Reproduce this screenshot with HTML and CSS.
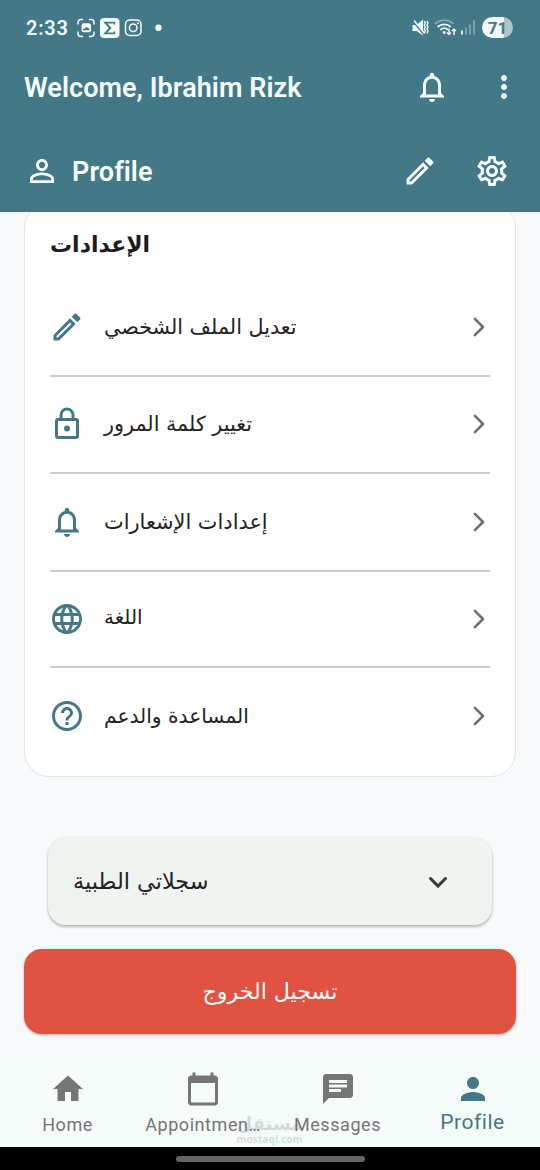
FILE: index.html
```html
<!DOCTYPE html>
<html lang="en">
<head>
<meta charset="utf-8">
<title>Profile</title>
<link rel="stylesheet" href="styles.css">
</head>
<body>
<svg class="defs" width="0" height="0" aria-hidden="true">
  <symbol id="pencil" viewBox="0 0 24 24"><path d="M3 17.25V21h3.75L17.81 9.94l-3.75-3.75L3 17.25zM5.92 19H5v-.92l9.06-9.06.92.92L5.92 19zM20.71 5.63l-2.34-2.34c-.2-.2-.45-.29-.71-.29s-.51.1-.7.29l-1.83 1.83 3.75 3.75 1.83-1.83c.39-.39.39-1.02 0-1.41z"/></symbol>
  <symbol id="bell" viewBox="0 0 24 24"><path d="M12 22c1.1 0 2-.9 2-2h-4c0 1.1.9 2 2 2zm6-6v-5c0-3.07-1.63-5.64-4.5-6.32V4c0-.83-.67-1.5-1.5-1.5s-1.5.67-1.5 1.5v.68C7.64 5.36 6 7.92 6 11v5l-2 2v1h16v-1l-2-2zm-2 1H8v-6c0-2.48 1.51-4.5 4-4.5s4 2.02 4 4.5v6z"/></symbol>
  <symbol id="chevron" viewBox="0 0 24 24"><path d="M8.6 6.600 14 12l-5.400 5.400" fill="none" stroke="currentColor" stroke-width="1.7" stroke-linecap="round" stroke-linejoin="round"/></symbol>
</svg>
<header class="header">
  <div class="status">
    <span class="clock">2:33</span>
    <svg class="status-left" width="86" height="20" viewBox="0 0 86 20">
      <g fill="none" stroke="#f4fcfc" stroke-width="1.5" stroke-linecap="round">
        <path d="M1 6V4.500A3 3 0 0 1 4 1.500h1.500M12.500 1.500H14a3 3 0 0 1 3 3V6M17 14v1.500a3 3 0 0 1-3 3h-1.500M5.500 18.500H4a3 3 0 0 1-3-3V14"/>
        <rect x="48.500" y="2" width="15.500" height="15.500" rx="4.200"/>
        <circle cx="56.200" cy="9.800" r="3.800"/>
      </g>
      <rect x="4.600" y="5.300" width="9.400" height="9" rx="2" fill="#f4fcfc"/>
      <path d="M6 12.200V11l2-.8 1.500-1.500 3 2.300v1.200z" fill="#437886"/>
      <rect x="23" y="0" width="19.500" height="20" rx="4" fill="#f4fcfc"/>
      <path d="M37.300 6.500V4.600h-9l5 5.400-5 5.400h9v-1.900" fill="none" stroke="#437886" stroke-width="1.900"/>
      <circle cx="61" cy="5.200" r="1" fill="#f4fcfc"/>
      <circle cx="81.500" cy="9.800" r="3.200" fill="#f4fcfc"/>
    </svg>
    <svg class="status-right" width="64" height="20" viewBox="0 0 64 20">
      <path d="M.5 7h4L11 1.500v16L4.500 13H.5z" fill="#f4fcfc"/>
      <path d="M1.300 3 12 16" stroke="#437886" stroke-width="2.600"/>
      <path d="M2 2.500 12.300 15" stroke="#f4fcfc" stroke-width="1.500"/>
      <path d="m12.300 3 1 2-1 2 1 2-1 2 1 2-1 2.500M15 3l1 2-1 2 1 2-1 2 1 2-1 2.500" fill="none" stroke="#f4fcfc" stroke-width="1.400"/>
      <g fill="none" stroke="#f4fcfc" stroke-width="1.700">
        <path d="M23 6c5-5 13.500-5 18.500 0" opacity=".42"/>
        <path d="M25.600 9c3.900-3.500 9.500-3.500 13.200 0M28.500 11.800c2.300-2 5.200-2 7.500 0"/>
        <path d="M37 10.500v6M35 14.500l2 2 2-2M42 17v-6M40 13l2-2 2 2" stroke-width="1.400"/>
      </g>
      <circle cx="32.200" cy="14.400" r="1.500" fill="#f4fcfc"/>
      <path d="M49.900 12.500v4" stroke="#f4fcfc" stroke-width="1.800"/>
      <path d="M54 9.500v7M58 6.500v10M62 2v14.500" stroke="#f4fcfc" stroke-width="1.500" opacity=".42"/>
    </svg>
    <span class="battery">71</span>
  </div>
  <div class="welcome">
    <h1 class="title">Welcome, Ibrahim Rizk</h1>
    <svg class="icon bell-top"><use href="#bell"/></svg>
    <svg class="icon" viewBox="0 0 24 24"><path d="M12 8c1.1 0 2-.9 2-2s-.9-2-2-2-2 .9-2 2 .9 2 2 2zm0 2c-1.100 0-2 .9-2 2s.9 2 2 2 2-.9 2-2-.9-2-2-2zm0 6c-1.100 0-2 .9-2 2s.9 2 2 2 2-.9 2-2-.9-2-2-2z"/></svg>
  </div>
  <div class="section">
    <svg class="icon" viewBox="0 0 24 24"><path d="M12 5.900c1.160 0 2.100.94 2.100 2.100s-.94 2.100-2.100 2.100S9.900 9.160 9.900 8s.94-2.100 2.100-2.100m0 9c2.970 0 6.100 1.460 6.100 2.100v1.100H5.900V17c0-.64 3.130-2.100 6.100-2.100M12 4C9.790 4 8 5.790 8 8s1.790 4 4 4 4-1.790 4-4-1.790-4-4-4zm0 9c-2.670 0-8 1.340-8 4v3h16v-3c0-2.660-5.330-4-8-4z"/></svg>
    <h2 class="title">Profile</h2>
    <svg class="icon edit-top"><use href="#pencil"/></svg>
    <svg class="icon" viewBox="0 0 24 24"><path d="M19.430 12.980c.04-.32.07-.64.07-.98 0-.34-.03-.66-.07-.98l2.110-1.650c.19-.15.24-.42.12-.64l-2-3.460c-.09-.16-.26-.25-.44-.25-.06 0-.12.01-.17.03l-2.490 1c-.52-.4-1.080-.73-1.690-.98l-.38-2.650C14.460 2.180 14.250 2 14 2h-4c-.25 0-.46.18-.49.42l-.38 2.650c-.61.25-1.170.59-1.690.98l-2.490-1c-.06-.02-.12-.03-.18-.03-.17 0-.34.09-.43.25l-2 3.460c-.13.22-.07.49.12.64l2.110 1.650c-.04.32-.07.65-.07.98 0 .33.03.66.07.98l-2.110 1.650c-.19.15-.24.42-.12.64l2 3.460c.09.16.26.25.44.25.06 0 .12-.01.17-.03l2.490-1c.52.4 1.080.73 1.690.98l.38 2.650c.03.24.24.42.49.42h4c.25 0 .46-.18.49-.42l.38-2.650c.61-.25 1.170-.59 1.690-.98l2.490 1c.06.02.12.03.18.03.17 0 .34-.09.43-.25l2-3.460c.12-.22.07-.49-.12-.64l-2.110-1.650zm-1.980-1.710c.04.31.05.52.05.73 0 .21-.02.43-.05.73l-.14 1.130.89.7 1.080.84-.7 1.210-1.270-.51-1.040-.42-.9.680c-.43.32-.84.56-1.250.73l-1.060.43-.16 1.130-.2 1.350h-1.400l-.19-1.350-.16-1.130-1.060-.43c-.43-.18-.83-.41-1.230-.71l-.91-.7-1.060.43-1.270.51-.7-1.210 1.080-.84.89-.7-.14-1.130c-.03-.31-.05-.54-.05-.74s.02-.43.05-.73l.14-1.130-.89-.7-1.080-.84.7-1.210 1.270.51 1.040.42.9-.68c.43-.32.84-.56 1.250-.73l1.060-.43.16-1.130.2-1.350h1.390l.19 1.350.16 1.130 1.060.43c.43.18.83.41 1.230.71l.91.7 1.060-.43 1.270-.51.7 1.210-1.070.85-.89.7.14 1.130zM12 8c-2.210 0-4 1.790-4 4s1.790 4 4 4 4-1.790 4-4-1.790-4-4-4zm0 6c-1.100 0-2-.9-2-2s.9-2 2-2 2 .9 2 2-.9 2-2 2z"/></svg>
  </div>
</header>
<main class="content">
  <section class="card">
    <h3 class="card-title" lang="ar">الإعدادات</h3>
    <div class="row">
      <svg class="icon"><use href="#pencil"/></svg>
      <span class="label t-edit" lang="ar">تعديل الملف الشخصي</span>
      <svg class="icon chev"><use href="#chevron"/></svg>
    </div>
    <div class="row">
      <svg class="icon" viewBox="0 0 24 24"><path d="M12 17a2 2 0 1 1 0-4 2 2 0 0 1 0 4m6 3V10H6v10h12m0-12a2 2 0 0 1 2 2v10a2 2 0 0 1-2 2H6a2 2 0 0 1-2-2V10c0-1.110.89-2 2-2h1V6a5 5 0 0 1 10 0v2h1m-6-5a3 3 0 0 0-3 3v2h6V6a3 3 0 0 0-3-3z"/></svg>
      <span class="label t-password" lang="ar">تغيير كلمة المرور</span>
      <svg class="icon chev"><use href="#chevron"/></svg>
    </div>
    <div class="row">
      <svg class="icon"><use href="#bell"/></svg>
      <span class="label t-alerts" lang="ar">إعدادات الإشعارات</span>
      <svg class="icon chev"><use href="#chevron"/></svg>
    </div>
    <div class="row row-language">
      <svg class="icon" viewBox="0 0 24 24"><path d="M11.990 2C6.470 2 2 6.480 2 12s4.470 10 9.990 10C17.520 22 22 17.520 22 12S17.520 2 11.990 2zm6.930 6h-2.950c-.32-1.250-.78-2.450-1.380-3.560 1.840.63 3.370 1.910 4.330 3.560zM12 4.040c.83 1.200 1.480 2.530 1.910 3.960h-3.820c.43-1.430 1.080-2.760 1.910-3.960zM4.260 14C4.100 13.360 4 12.690 4 12s.1-1.360.26-2h3.380c-.08.66-.14 1.320-.14 2s.06 1.340.14 2H4.260zm.82 2h2.950c.32 1.250.78 2.450 1.380 3.560-1.840-.63-3.370-1.900-4.330-3.560zm2.950-8H5.080c.96-1.660 2.490-2.930 4.330-3.560C8.810 5.550 8.350 6.750 8.030 8zM12 19.960c-.83-1.200-1.480-2.530-1.910-3.960h3.820c-.43 1.430-1.080 2.760-1.910 3.960zM14.340 14H9.660c-.09-.66-.16-1.320-.16-2s.07-1.350.16-2h4.680c.09.65.16 1.320.16 2s-.07 1.340-.16 2zm.25 5.560c.6-1.110 1.060-2.310 1.380-3.560h2.950c-.96 1.650-2.490 2.930-4.330 3.560zM16.360 14c.08-.66.14-1.320.14-2s-.06-1.340-.14-2h3.380c.16.64.26 1.310.26 2s-.1 1.360-.26 2h-3.380z"/></svg>
      <span class="label t-language" lang="ar">اللغة</span>
      <svg class="icon chev"><use href="#chevron"/></svg>
    </div>
    <div class="row">
      <svg class="icon" viewBox="0 0 24 24"><path d="M11 18h2v-2h-2v2zm1-16C6.480 2 2 6.480 2 12s4.480 10 10 10 10-4.480 10-10S17.520 2 12 2zm0 18c-4.410 0-8-3.590-8-8s3.590-8 8-8 8 3.590 8 8-3.590 8-8 8zm0-14c-2.210 0-4 1.790-4 4h2c0-1.100.9-2 2-2s2 .9 2 2c0 2-3 1.750-3 5h2c0-2.250 3-2.500 3-5 0-2.210-1.790-4-4-4z"/></svg>
      <span class="label t-help" lang="ar">المساعدة والدعم</span>
      <svg class="icon chev"><use href="#chevron"/></svg>
    </div>
  </section>
  <div class="records">
    <span class="label t-records" lang="ar">سجلاتي الطبية</span>
    <svg class="icon" viewBox="0 0 24 24"><path d="m7 9.700 5 5 5-5" fill="none" stroke="currentColor" stroke-width="2" stroke-linecap="round"/></svg>
  </div>
  <button class="logout"><span class="label t-logout" lang="ar">تسجيل الخروج</span></button>
</main>
<nav class="tabs">
  <div class="tab">
    <svg class="icon" viewBox="0 0 24 24"><path d="M10 20v-6h4v6h5v-8h3L12 3 2 12h3v8z"/></svg>
    <span>Home</span>
  </div>
  <div class="tab">
    <svg class="icon" viewBox="0 0 24 24"><path d="M20 3h-1V1h-2v2H7V1H5v2H4c-1.100 0-2 .9-2 2v16c0 1.100.9 2 2 2h16c1.100 0 2-.9 2-2V5c0-1.100-.9-2-2-2zm0 18H4V8h16v13z"/></svg>
    <span class="appointments">Appointmen<span class="dots">...</span></span>
  </div>
  <div class="tab">
    <svg class="icon" viewBox="0 0 24 24"><path d="M20 2H4c-1.100 0-1.990.9-1.990 2L2 22l4-4h14c1.100 0 2-.9 2-2V4c0-1.100-.9-2-2-2zM6 9h12v2H6V9zm8 5H6v-2h8v2zm4-6H6V6h12v2z"/></svg>
    <span>Messages</span>
  </div>
  <div class="tab active">
    <svg class="icon" viewBox="0 0 24 24"><path d="M12 12c2.210 0 4-1.790 4-4s-1.790-4-4-4-4 1.790-4 4 1.790 4 4 4zm0 2c-2.670 0-8 1.340-8 4v2h16v-2c0-2.660-5.330-4-8-4z"/></svg>
    <span>Profile</span>
  </div>
  <div class="watermark"><span class="mark-ar" lang="ar">مستقل</span><span class="mark-en">mostaql.com</span></div>
</nav>
<footer class="gesture"><i class="handle"></i></footer>
</body>
</html>
```

FILE: styles.css
```css
* { box-sizing: border-box; }
body {
  margin: 0;
  width: 540px;
  height: 1170px;
  display: flex;
  flex-direction: column;
  overflow: hidden;
  background: #f8f9fb;
  font-family: Roboto, "DejaVu Sans", sans-serif;
}
.defs { position: absolute; }
h1, h2, h3 { margin: 0; }
.icon { width: 36px; height: 36px; flex: none; fill: currentColor; display: block; }

.header { height: 212px; flex: none; background: #437886; color: #f6fdfd; }
.status { height: 45px; padding: 10px 27px 0 26px; display: flex; align-items: center; }
.clock { width: 51px; font-size: 20px; font-weight: 600; letter-spacing: .7px; }
.status-right { margin-left: auto; margin-right: 6px; }
.battery {
  width: 31px; height: 21px; border-radius: 11px;
  background: linear-gradient(90deg, #f2f8f8 70%, #adc5cc 70%);
  color: #437886; font-size: 17px; font-weight: 700; line-height: 22px; text-align: center;
}
.welcome { height: 84px; padding: 0 18px 0 24px; display: flex; align-items: center; }
.title { flex: 1; padding-top: 2px; font-size: 27px; font-weight: 600; line-height: 36px; letter-spacing: .06px; white-space: nowrap; }
.bell-top { margin-right: 36px; }
.section { height: 84px; padding: 0 30px 0 24px; display: flex; align-items: center; }
.section .title { margin-left: 12px; }
.edit-top { margin-right: 36px; }

.content { height: 848px; flex: none; overflow: hidden; padding: 0 24px; }
.card {
  height: 574px; margin-top: -9px; padding: 20px 25px 0;
  border: 1.500px solid #dfe4e6; border-radius: 25px; background: #fff;
}
.card-title { height: 55px; font-family: "DejaVu Sans", sans-serif; font-size: 22px; font-weight: 700; line-height: 42px; color: #1c1b1f; }
.row { height: 97.500px; display: flex; align-items: center; border-bottom: 2px solid #cacccd; color: #437886; }
.row:last-child { border: 0; height: 96px; }
.row-language { height: 96px; }
.label { font-family: "DejaVu Sans", sans-serif; font-size: 20.700px; line-height: 36px; color: #222; white-space: nowrap; }
.row .icon:first-child { margin-left: -.6px; }
.row .label { margin-left: 18.600px; }
.row .t-alerts { font-size: 20.900px; }
.row .t-language { font-size: 20px; padding-bottom: 4px; }
.row .t-help { font-size: 20.200px; }
.t-records { font-size: 22.400px; padding-bottom: 2px; }
.t-logout { font-size: 22.100px; padding-bottom: 2px; }
.row .chev { margin-left: auto; margin-right: -7.600px; color: #6e6e6e; }
.records {
  margin: 61px 24px 0; height: 87px; padding: 0 36px 0 25px;
  display: flex; align-items: center; justify-content: space-between;
  border-radius: 18px; background: #f0f4f1; color: #343b39;
  box-shadow: 0 1.500px 3px rgba(0,0,0,.28);
}
.logout {
  width: 492px; height: 85px; margin-top: 24px; padding: 0; display: flex; align-items: center; justify-content: center;
  border: 0; border-radius: 18px; background: #e05342; box-shadow: 0 1px 3px rgba(0,0,0,.3); font-family: inherit;
}
.logout .label { color: #fff; font-weight: 500; }

.tabs {
  position: relative; height: 87px; flex: none; display: grid; grid-template-columns: repeat(4, 1fr);
  background: #f5fbf9; color: #757575; font-size: 18px; letter-spacing: .55px;
}
.tab { display: flex; flex-direction: column; align-items: center; padding-top: 11px; line-height: 24px; }
.tab .icon { margin-bottom: 6px; }
.tab span { white-space: nowrap; }
.dots { letter-spacing: -1px; }
.active { color: #437886; font-size: 21px; }
.active .icon { margin-bottom: 3px; }
.watermark {
  position: absolute; left: 236px; top: 55px; width: 67px; display: flex; flex-direction: column; align-items: center;
  color: rgba(110,120,120,.25); letter-spacing: 0; line-height: 18px;
}
.mark-ar { font-family: "DejaVu Sans", sans-serif; font-size: 18px; font-weight: 700; }
.mark-en { font: 700 10.200px/12px "Open Sans", sans-serif; }
.gesture { height: 23px; flex: none; background: #000; display: flex; justify-content: center; padding-top: 9px; }
.handle { width: 189px; height: 6px; border-radius: 3px; background: #656565; }
```
